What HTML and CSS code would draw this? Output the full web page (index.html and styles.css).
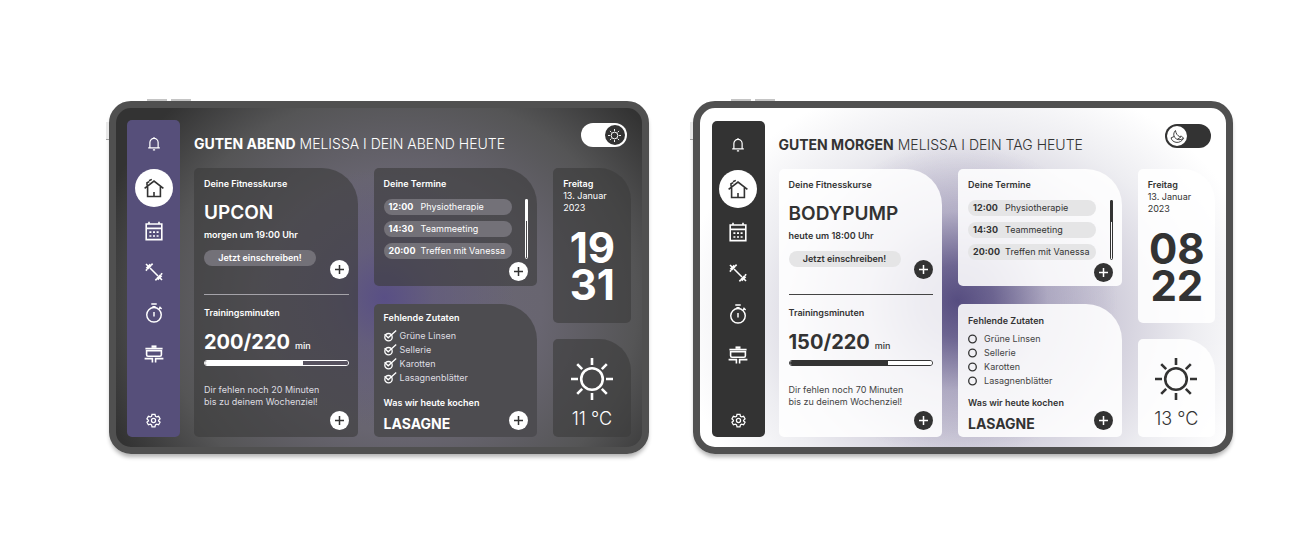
FILE: index.html
```html
<!DOCTYPE html>
<html lang="de">
<head>
<meta charset="utf-8">
<meta name="viewport" content="width=device-width, initial-scale=1">
<title>Dein Tag heute</title>
<link rel="stylesheet" href="styles.css">
</head>
<body>
<svg class="sprite" aria-hidden="true">
  <symbol id="bell" viewBox="0 0 14 16"><path d="M2.600 12.500V7a4.400 4.400 0 0 1 8.800 0v5.500M.8 12.600h12.400M7 2.600V1M5.800 14.800h2.400"/></symbol>
  <symbol id="home" viewBox="0 0 20 20"><path d="M.6 10.400 10 3l9.400 7.400M3.600 8.800v9.700h12.800V8.800M10 18.500v-4.400M3 7.400V4.800l2.200-1.200M5 2.800l2.800-1.400"/></symbol>
  <symbol id="calendar" viewBox="0 0 18 20"><path d="M1.200 3h15.600v15.600H1.200zM1.200 7.400h15.600M4 3V.8M14 3V.8"/><path d="M4.400 11.200h2M8 11.200h2M11.600 11.200h2M4.400 15h2M8 15h2M11.600 15h2" stroke-width="1.700"/></symbol>
  <symbol id="dumbbell" viewBox="0 0 20 20"><path d="m6 6 8 8"/><path d="M2.800 6.800 6.800 2.800M13.200 17.200l4-4" stroke-width="3"/><path d="M1.800 8.600l1.400-1.400M7.200 3.200l1.400-1.600M11.400 18.400l1.400-1.600M16.800 12.800l1.400-1.600M2 2l2 2M16 16l2 2"/></symbol>
  <symbol id="timer" viewBox="0 0 20 22"><circle cx="10" cy="13" r="8"/><path d="M10 9.800v5M7 1h6M8.200 4h3.600M15.600 6.600l1.400-1.400M16 4.200l2.400 2.400"/></symbol>
  <symbol id="grill" viewBox="0 0 20 18"><path d="M7.500 1.600h5" stroke-width="2.400"/><path d="M1.400 3.600h17.200M2.600 5.800h14.800v4q0 1.400-1.400 1.400H4Q2.600 11.200 2.600 9.800zM.6 13.600h7.800v4M19.400 13.600h-7.800v4"/></symbol>
  <symbol id="gear" viewBox="0 0 24 24"><circle cx="12" cy="12" r="3.300"/><path d="M9.600 2h4.800l.7 3.200 1.900 1.100 3.200-1 2.300 4.100-2.400 2.200v1l2.400 2.200-2.300 4.100-3.200-1-1.900 1.100-.7 3H9.600l-.7-3L7 17.900l-3.200 1-2.300-4.100 2.400-2.200v-1L1.500 9.400l2.300-4.100 3.200 1 1.900-1.100z"/></symbol>
  <symbol id="plus" viewBox="0 0 19 19"><path d="M9.500 5v9M5 9.500h9"/></symbol>
  <symbol id="sun" viewBox="0 0 42 42"><circle cx="21" cy="21" r="10.800"/><path d="M21 0v7M21 35v7M0 21h7M35 21h7M6.200 6.200l5 5M30.800 30.800l5 5M35.800 6.200l-5 5M11.200 30.800l-5 5"/></symbol>
  <symbol id="moon" viewBox="0 0 16 16"><path d="M5.800 1.600C3.600 4 3.400 7 5.200 9.200c2.200 2.600 6 3 9.200.6-1.400 3.200-4.600 5-8 4.400-3-.6-5-2.400-5.200-4.800L4.400 8M5.800 1.600c.6 3.200 2 5.600 4.400 6.400l2-.4 2.200 2.200M7.600 11.200l4-2.600"/></symbol>
  <symbol id="ring" viewBox="0 0 13 12"><circle cx="4.500" cy="6" r="3.800"/></symbol>
  <symbol id="ring-check" viewBox="0 0 13 12"><circle cx="4.500" cy="7.200" r="3.700"/><path d="M.6 4.200l3.600 3.600L12.200.6"/></symbol>
</svg>

<main class="stage">
  <section class="tablet evening" aria-label="Abendansicht">
    <nav class="sidebar" aria-label="Menü Abend">
      <a class="bell" href="#" aria-label="Mitteilungen"><svg><use href="#bell"/></svg></a>
      <a class="home" href="#" aria-label="Start"><svg><use href="#home"/></svg></a>
      <a href="#" aria-label="Kalender"><svg><use href="#calendar"/></svg></a>
      <a href="#" aria-label="Training"><svg><use href="#dumbbell"/></svg></a>
      <a href="#" aria-label="Timer"><svg><use href="#timer"/></svg></a>
      <a href="#" aria-label="Kochen"><svg><use href="#grill"/></svg></a>
      <a class="settings" href="#" aria-label="Einstellungen"><svg><use href="#gear"/></svg></a>
    </nav>
    <div class="content">
      <header class="topbar">
        <h1><strong>GUTEN ABEND</strong> MELISSA I DEIN ABEND HEUTE</h1>
        <label class="switch"><input type="checkbox" aria-label="Heller Modus" checked><span class="knob"><svg><use href="#sun"/></svg></span></label>
      </header>
      <div class="columns">
        <section class="card fitness">
          <h2>Deine Fitnesskurse</h2>
          <p class="headline">UPCON</p>
          <p class="when">morgen um 19:00 Uhr</p>
          <div class="actions">
            <button class="enroll" type="button">Jetzt einschreiben!</button>
            <button class="add" type="button" aria-label="Kurs hinzufügen"><svg><use href="#plus"/></svg></button>
          </div>
          <hr>
          <h2>Trainingsminuten</h2>
          <p class="minutes"><b>200/220</b> <span>min</span></p>
          <progress value="69" max="100" aria-label="Trainingsminuten"></progress>
          <p class="hint">Dir fehlen noch 20 Minuten<br>bis zu deinem Wochenziel!</p>
          <button class="add" type="button" aria-label="Training hinzufügen"><svg><use href="#plus"/></svg></button>
        </section>
        <div class="stack">
          <section class="card agenda">
            <h2>Deine Termine</h2>
            <div class="scroller">
              <ul>
                <li><time>12:00</time>Physiotherapie</li>
                <li><time>14:30</time>Teammeeting</li>
                <li><time>20:00</time>Treffen mit Vanessa</li>
              </ul>
              <div class="track"><div class="thumb"></div></div>
            </div>
            <button class="add" type="button" aria-label="Termin hinzufügen"><svg><use href="#plus"/></svg></button>
          </section>
          <section class="card shopping">
            <h2>Fehlende Zutaten</h2>
            <div class="items">
              <label><span class="tick"><input type="checkbox" checked><svg><use href="#ring-check"/></svg></span>Grüne Linsen</label>
              <label><span class="tick"><input type="checkbox" checked><svg><use href="#ring-check"/></svg></span>Sellerie</label>
              <label><span class="tick"><input type="checkbox" checked><svg><use href="#ring-check"/></svg></span>Karotten</label>
              <label><span class="tick"><input type="checkbox" checked><svg><use href="#ring-check"/></svg></span>Lasagnenblätter</label>
            </div>
            <h2 class="cook">Was wir heute kochen</h2>
            <div class="meal">
              <strong>LASAGNE</strong>
              <button class="add" type="button" aria-label="Gericht hinzufügen"><svg><use href="#plus"/></svg></button>
            </div>
          </section>
        </div>
        <div class="stack narrow">
          <section class="card date">
            <h2>Freitag</h2>
            <p>13. Januar<br>2023</p>
            <p class="clock">19<br>31</p>
          </section>
          <section class="card weather">
            <svg><use href="#sun"/></svg>
            <p>11 °C</p>
          </section>
        </div>
      </div>
    </div>
  </section>

  <section class="tablet morning" aria-label="Morgenansicht">
    <nav class="sidebar" aria-label="Menü Morgen">
      <a class="bell" href="#" aria-label="Mitteilungen"><svg><use href="#bell"/></svg></a>
      <a class="home" href="#" aria-label="Start"><svg><use href="#home"/></svg></a>
      <a href="#" aria-label="Kalender"><svg><use href="#calendar"/></svg></a>
      <a href="#" aria-label="Training"><svg><use href="#dumbbell"/></svg></a>
      <a href="#" aria-label="Timer"><svg><use href="#timer"/></svg></a>
      <a href="#" aria-label="Kochen"><svg><use href="#grill"/></svg></a>
      <a class="settings" href="#" aria-label="Einstellungen"><svg><use href="#gear"/></svg></a>
    </nav>
    <div class="content">
      <header class="topbar">
        <h1><strong>GUTEN MORGEN</strong> MELISSA I DEIN TAG HEUTE</h1>
        <label class="switch"><input type="checkbox" aria-label="Dunkler Modus"><span class="knob"><svg><use href="#moon"/></svg></span></label>
      </header>
      <div class="columns">
        <section class="card fitness">
          <h2>Deine Fitnesskurse</h2>
          <p class="headline">BODYPUMP</p>
          <p class="when">heute um 18:00 Uhr</p>
          <div class="actions">
            <button class="enroll" type="button">Jetzt einschreiben!</button>
            <button class="add" type="button" aria-label="Kurs hinzufügen"><svg><use href="#plus"/></svg></button>
          </div>
          <hr>
          <h2>Trainingsminuten</h2>
          <p class="minutes"><b>150/220</b> <span>min</span></p>
          <progress value="69" max="100" aria-label="Trainingsminuten"></progress>
          <p class="hint">Dir fehlen noch 70 Minuten<br>bis zu deinem Wochenziel!</p>
          <button class="add" type="button" aria-label="Training hinzufügen"><svg><use href="#plus"/></svg></button>
        </section>
        <div class="stack">
          <section class="card agenda">
            <h2>Deine Termine</h2>
            <div class="scroller">
              <ul>
                <li><time>12:00</time>Physiotherapie</li>
                <li><time>14:30</time>Teammeeting</li>
                <li><time>20:00</time>Treffen mit Vanessa</li>
              </ul>
              <div class="track"><div class="thumb"></div></div>
            </div>
            <button class="add" type="button" aria-label="Termin hinzufügen"><svg><use href="#plus"/></svg></button>
          </section>
          <section class="card shopping">
            <h2>Fehlende Zutaten</h2>
            <div class="items">
              <label><span class="tick"><input type="checkbox"><svg><use href="#ring"/></svg></span>Grüne Linsen</label>
              <label><span class="tick"><input type="checkbox"><svg><use href="#ring"/></svg></span>Sellerie</label>
              <label><span class="tick"><input type="checkbox"><svg><use href="#ring"/></svg></span>Karotten</label>
              <label><span class="tick"><input type="checkbox"><svg><use href="#ring"/></svg></span>Lasagnenblätter</label>
            </div>
            <h2 class="cook">Was wir heute kochen</h2>
            <div class="meal">
              <strong>LASAGNE</strong>
              <button class="add" type="button" aria-label="Gericht hinzufügen"><svg><use href="#plus"/></svg></button>
            </div>
          </section>
        </div>
        <div class="stack narrow">
          <section class="card date">
            <h2>Freitag</h2>
            <p>13. Januar<br>2023</p>
            <p class="clock">08<br>22</p>
          </section>
          <section class="card weather">
            <svg><use href="#sun"/></svg>
            <p>13 °C</p>
          </section>
        </div>
      </div>
    </div>
  </section>
</main>
</body>
</html>
```

FILE: styles.css
```css
* { box-sizing: border-box; margin: 0; padding: 0; }

body {
  background: #fff;
  font-family: Inter, "Liberation Sans", sans-serif;
  font-size: 9px;
  line-height: 12px;
}

.sprite { display: none; }
svg { display: block; fill: none; stroke: currentColor; }
ul { list-style: none; }
a { color: inherit; }
button { border: 0; font: inherit; color: inherit; cursor: pointer; }

.stage {
  display: flex;
  align-items: flex-start;
  gap: 44px;
  padding: 101px 77px 90px 109px;
}

/* Device frame */
.tablet {
  position: relative;
  flex: 1;
  display: flex;
  gap: 14px;
  padding: 12px 11px 10px;
  border: 7px solid #505050;
  border-radius: 22px;
  box-shadow: 0 4px 4px -1px rgba(0, 0, 0, .3);
  color: var(--ink);
}
.tablet::before {
  content: "";
  position: absolute;
  top: -9px;
  left: 31px;
  width: 44px;
  height: 2px;
  background: linear-gradient(90deg, #c4c4c4 20px, transparent 20px 24px, #c4c4c4 24px);
}
.tablet::after {
  content: "";
  position: absolute;
  top: 14px;
  left: -10px;
  width: 3px;
  height: 18px;
  background: linear-gradient(#e8e8e8 17px, #a0a0a0 17px);
}

.evening {
  --ink: #fff;
  --soft: #dedde1;
  --paper: #57525f;
  --accent: #fff;
  --on-accent: #333;
  --line: #a5a3a9;
  --card: rgba(60, 60, 60, .62);
  --pill: #737178;
  --bar: #564f7a;
  background:
    radial-gradient(circle at 51% 56%, rgba(88, 78, 134, .95) 0, rgba(96, 88, 128, .6) 50px, rgba(105, 100, 115, 0) 130px),
    radial-gradient(ellipse 60% 84% at 54% 58%, #6b6776 0, #686570 45%, #555556 75%, #333 100%);
}
.morning {
  --ink: #333;
  --soft: #444;
  --paper: #fff;
  --accent: #333;
  --on-accent: #fff;
  --line: #444;
  --card: rgba(255, 255, 255, .88);
  --pill: #e5e5e6;
  --bar: #333;
  padding: 13px 11px 10px 12px;
  background:
    radial-gradient(circle at 49% 57%, #564d80 0, rgba(88, 79, 130, .8) 36px, rgba(140, 133, 170, .4) 90px, rgba(180, 175, 200, 0) 160px),
    radial-gradient(ellipse 56% 74% at 52% 62%, #b5b1c5 0, #cecbd9 45%, #ededf1 75%, #fff 100%);
}

/* Navigation */
.sidebar {
  flex: 0 0 53px;
  display: flex;
  flex-direction: column;
  align-items: center;
  padding: 12px 0 6px;
  border-radius: 5px;
  background: var(--bar);
  color: #fff;
}
.sidebar a {
  display: grid;
  place-items: center;
  width: 38px;
  height: 41px;
}
.sidebar svg { width: 20px; height: 20px; stroke-width: 1.600; }
.sidebar .bell { height: 22px; margin-bottom: 15px; }
.sidebar .bell svg { width: 14px; height: 15px; stroke-width: 1.300; }
.sidebar .home {
  height: 38px;
  margin-bottom: 3px;
  border-radius: 50%;
  background: #fff;
  color: #333;
}
.sidebar .settings { height: 22px; margin-top: auto; }
.sidebar .settings svg { width: 15px; height: 15px; stroke-width: 2; }

/* Header */
.content { flex: 1; display: flex; flex-direction: column; min-width: 0; }
.topbar { display: flex; justify-content: space-between; height: 48px; }
h1 { padding-top: 12px; font-size: 14px; line-height: 24px; font-weight: 300; white-space: nowrap; }
h1 strong { font-weight: 700; }
.switch {
  position: relative;
  display: flex;
  width: 46px;
  height: 24px;
  margin: 3px 4px 0 0;
  padding: 2px;
  border-radius: 12px;
  background: var(--accent);
}
.switch input, .tick input {
  position: absolute;
  inset: 0;
  width: 100%;
  height: 100%;
  opacity: 0;
}
.knob {
  display: grid;
  place-items: center;
  width: 20px;
  height: 20px;
  border-radius: 50%;
  background: var(--on-accent);
  color: var(--accent);
}
.switch input:checked + .knob { margin-left: auto; }
.knob svg { width: 13px; height: 13px; stroke-width: 3; }
.morning .knob svg { width: 15px; height: 15px; stroke-width: 1; }

/* Cards */
.columns { flex: 1; display: grid; grid-template-columns: 163fr 163fr 77fr; gap: 16px; }
.stack { display: flex; flex-direction: column; gap: 18px; min-width: 0; }
.narrow { gap: 16px; }
.card {
  display: flex;
  flex-direction: column;
  padding: 10px 9px 7px 10px;
  border-radius: 5px 36px 5px 5px;
  background: var(--card);
}
.narrow .card { border-radius: 5px 32px 5px 5px; }
h2 { font-size: 9px; font-weight: 600; white-space: nowrap; }

.add {
  flex: none;
  align-self: flex-end;
  width: 19px;
  height: 19px;
  border-radius: 50%;
  background: var(--accent);
  color: var(--on-accent);
}
.add svg { width: 19px; height: 19px; stroke-width: 1.500; }

.headline { margin-top: 11px; font-size: 19px; line-height: 24px; font-weight: 600; }
.when { margin-top: 4px; font-weight: 600; }
.actions { display: flex; justify-content: space-between; align-items: flex-start; height: 29px; margin-top: 9px; }
.actions .add { align-self: flex-end; }
.morning .actions { height: 28px; }
.enroll { width: 112px; height: 16px; border-radius: 8px; background: var(--pill); font-weight: 600; }
hr { height: 1px; margin: 15px 0 12px; border: 0; background: var(--line); }
.minutes { display: flex; align-items: baseline; gap: 5px; height: 24px; margin-top: 11px; font-weight: 500; }
.minutes b { font-size: 20px; line-height: 24px; font-weight: 700; }
progress {
  appearance: none;
  display: block;
  width: 100%;
  height: 6px;
  margin-top: 6px;
  border: 1px solid var(--ink);
  border-radius: 3px;
  background: var(--paper);
  overflow: hidden;
}
progress::-webkit-progress-bar { background: var(--paper); }
progress::-webkit-progress-value { background: var(--accent); }
.hint { margin: 18px 0 3px; color: var(--soft); }

.agenda { padding-bottom: 5px; }
.morning .agenda { padding-bottom: 4px; }
.scroller { display: flex; justify-content: space-between; margin: 9px 0 3px; }
.scroller ul { display: grid; gap: 6px; width: 128px; }
.scroller li {
  display: flex;
  height: 16px;
  padding-left: 5px;
  border-radius: 8px;
  background: var(--pill);
  line-height: 16px;
  white-space: nowrap;
}
.scroller time { width: 32px; font-weight: 700; }
.track { width: 3px; border: 1px solid var(--ink); border-radius: 2px; }
.thumb { height: 22px; margin: -1px; border-radius: 2px; background: var(--ink); }

.shopping { flex: 1; padding-top: 8px; padding-bottom: 4px; }
.evening .shopping { background: #4d4c50; }
.morning .shopping { padding-top: 11px; }
.items { display: grid; margin-top: 5px; color: var(--soft); }
.items label { display: flex; align-items: center; gap: 3px; line-height: 14px; }
.tick { position: relative; width: 13px; color: var(--ink); }
.tick svg { width: 13px; height: 12px; stroke-width: 1.300; }
.cook { margin-top: auto; }
.meal { display: flex; justify-content: space-between; margin-top: 2px; height: 22px; }
.meal strong { align-self: flex-end; font-size: 14px; line-height: 18px; font-weight: 700; }
.meal .add { align-self: flex-start; }

.date { flex: 1; }
.clock { margin-top: 15px; font-size: 42px; line-height: 37px; font-weight: 700; text-align: center; }
.weather { align-items: center; padding: 19px 9px 7px; }
.weather svg { width: 42px; height: 42px; stroke-width: 2.600; }
.weather p { margin-top: 7px; font-size: 18px; line-height: 23px; font-weight: 300; white-space: nowrap; }
```
